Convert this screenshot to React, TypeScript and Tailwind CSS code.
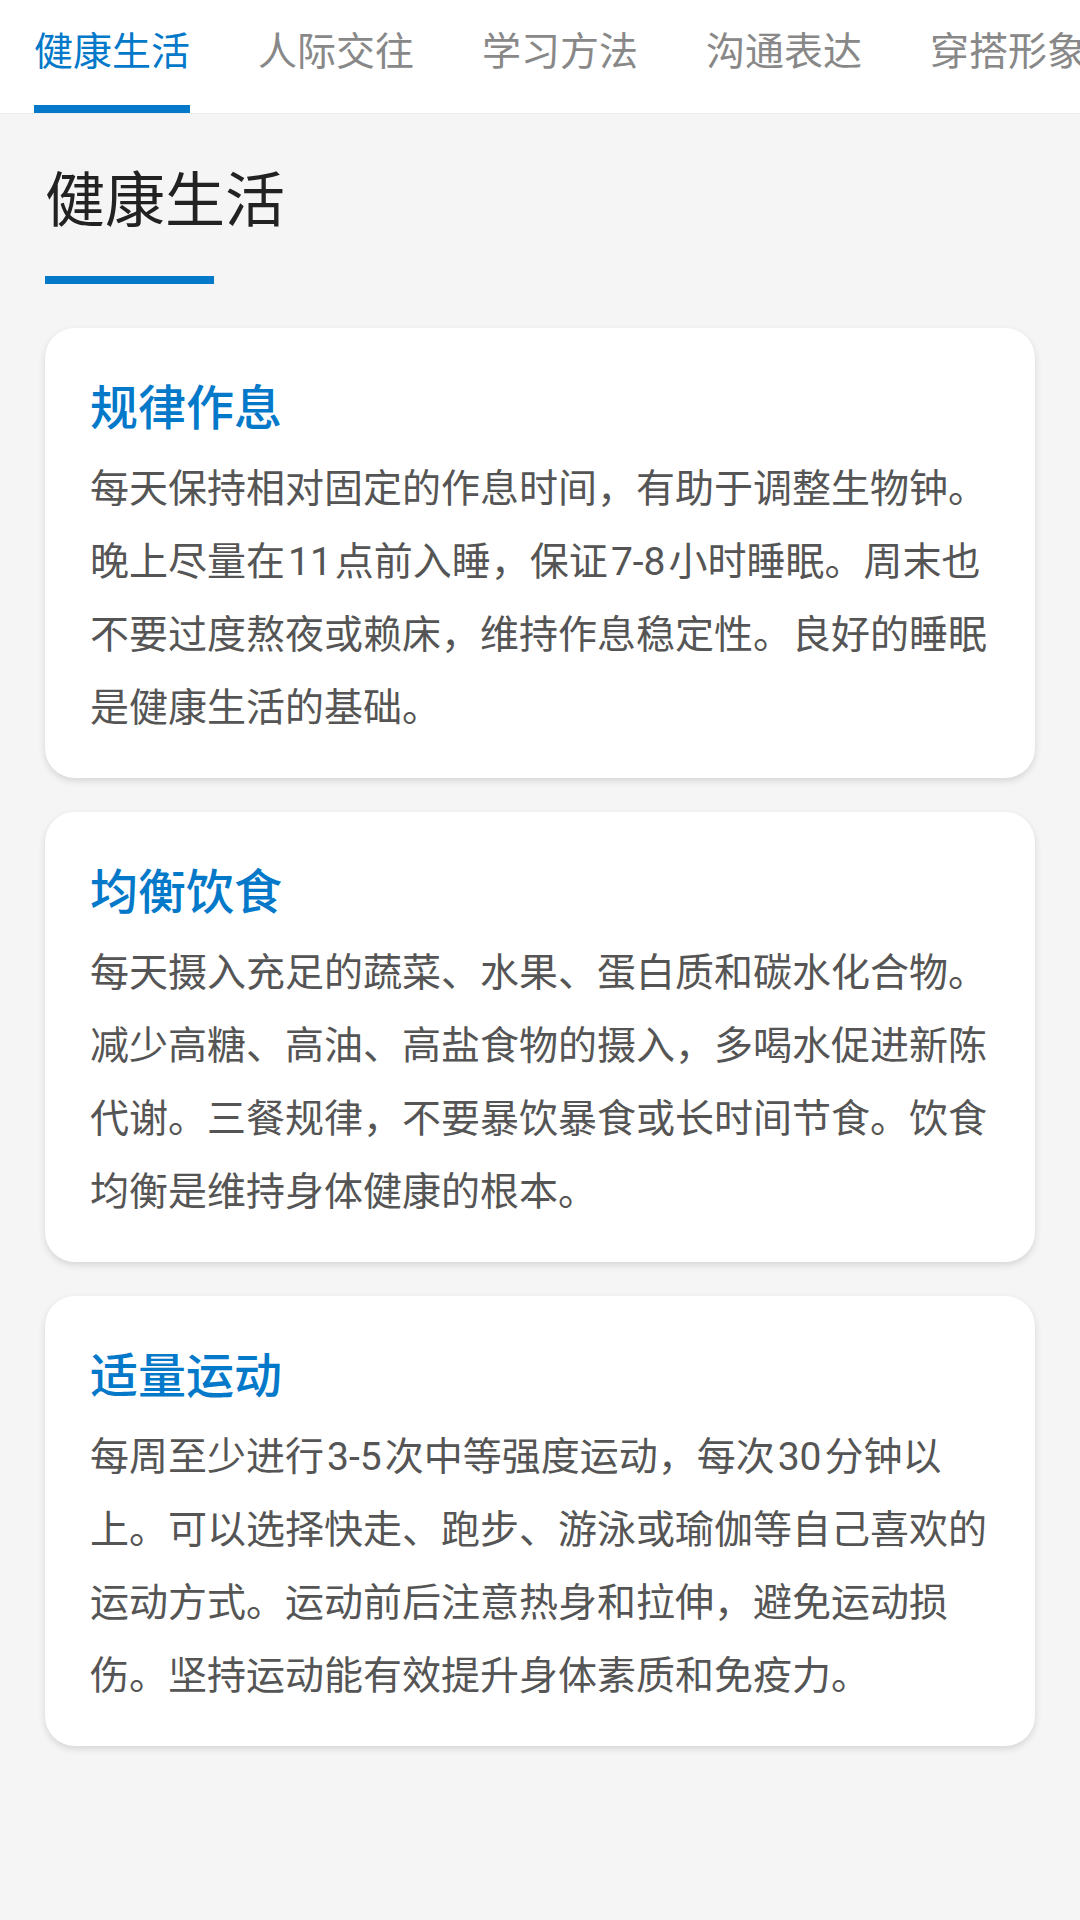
import React from "react";

const tabs = ["健康生活", "人际交往", "学习方法", "沟通表达", "穿搭形象"];

const cards = [
  {
    title: "规律作息",
    body: "每天保持相对固定的作息时间，有助于调整生物钟。晚上尽量在11点前入睡，保证7-8小时睡眠。周末也不要过度熬夜或赖床，维持作息稳定性。良好的睡眠是健康生活的基础。",
  },
  {
    title: "均衡饮食",
    body: "每天摄入充足的蔬菜、水果、蛋白质和碳水化合物。减少高糖、高油、高盐食物的摄入，多喝水促进新陈代谢。三餐规律，不要暴饮暴食或长时间节食。饮食均衡是维持身体健康的根本。",
  },
  {
    title: "适量运动",
    body: "每周至少进行3-5次中等强度运动，每次30分钟以上。可以选择快走、跑步、游泳或瑜伽等自己喜欢的运动方式。运动前后注意热身和拉伸，避免运动损伤。坚持运动能有效提升身体素质和免疫力。",
  },
];

function Body({ text }: { text: string }) {
  const parts = text.split(/(\d[\d-]*)/);
  return (
    <>
      {parts.map((p, i) =>
        /^\d/.test(p) ? (
          <span key={i} className="mx-[3px] leading-none" style={{ fontFamily: "Roboto, sans-serif" }}>
            {p}
          </span>
        ) : (
          <React.Fragment key={i}>{p}</React.Fragment>
        )
      )}
    </>
  );
}

export default function App() {
  return (
    <div
      className="min-h-screen bg-[#f5f5f5]"
      style={{ fontFamily: '"Noto Sans CJK SC", "Noto Sans", sans-serif' }}
    >
      <div className="flex h-[114px] overflow-hidden whitespace-nowrap border-b border-[#ececec] bg-white">
        {tabs.map((t, i) => (
          <div key={t} className="flex shrink-0 flex-col px-[34px]">
            <div
              className={
                i === 0
                  ? "pt-[29px] text-[39px] leading-[39px] text-[#0479c9]"
                  : "pt-[29px] text-[39px] leading-[39px] text-[#888888]"
              }
            >
              {t}
            </div>
            <div className={i === 0 ? "mt-auto h-[8px] bg-[#0479c9]" : "mt-auto h-[8px]"} />
          </div>
        ))}
      </div>

      <div className="px-[45px] pt-[42px]">
        <h1 className="text-[60px] leading-[80px] font-normal text-[#222222]">健康生活</h1>
        <div className="mt-[40px] h-[8px] w-[169px] bg-[#0479c9]" />

        <div className="mt-[44px] flex flex-col gap-[34px]">
          {cards.map((c) => (
            <div
              key={c.title}
              className="rounded-[30px] bg-white px-[45px] pt-[46px] pb-[37px] shadow-[0_3px_7px_rgba(0,0,0,0.13)]"
            >
              <h2 className="text-[48px] leading-[60px] font-medium text-[#0479c9]">{c.title}</h2>
              <p className="mt-[15px] text-[39px] leading-[73px] text-[#555555]">
                <Body text={c.body} />
              </p>
            </div>
          ))}
        </div>
      </div>
    </div>
  );
}
